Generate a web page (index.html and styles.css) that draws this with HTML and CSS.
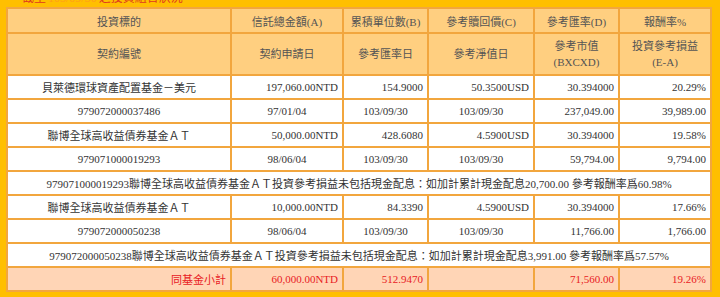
FILE: index.html
```html
<!DOCTYPE html>
<html lang="zh-Hant">
<head>
    <meta charset="UTF-8">
    <title>投資組合狀況</title>
    <link rel="stylesheet" href="styles.css">
</head>
<body>

<div class="titulo">截至<span class="fecha">103/09/30</span>之投資組合狀況</div>

<table class="cartera">
    <colgroup>
        <col class="c1"><col class="c2"><col class="c3"><col class="c4"><col class="c5"><col class="c6">
    </colgroup>
    <!-- Encabezados -->
    <tr class="cab cab1">
        <th>投資標的</th>
        <th>信託總金額(A)</th>
        <th>累積單位數(B)</th>
        <th>參考贖回價(C)</th>
        <th>參考匯率(D)</th>
        <th>報酬率%</th>
    </tr>
    <tr class="cab cab2">
        <th>契約編號</th>
        <th>契約申請日</th>
        <th>參考匯率日</th>
        <th>參考淨值日</th>
        <th>參考市值<br>(BXCXD)</th>
        <th>投資參考損益<br>(E-A)</th>
    </tr>

    <tr>
        <td class="nombre">貝萊德環球資產配置基金－美元</td>
        <td class="num">197,060.00NTD</td>
        <td class="num">154.9000</td>
        <td class="num">50.3500USD</td>
        <td class="num">30.394000</td>
        <td class="num">20.29%</td>
    </tr>
    <tr>
        <td class="nombre">979072000037486</td>
        <td class="fec">97/01/04</td>
        <td class="fec">103/09/30</td>
        <td class="fec">103/09/30</td>
        <td class="num">237,049.00</td>
        <td class="num">39,989.00</td>
    </tr>

    <tr>
        <td class="nombre">聯博全球高收益債券基金ＡＴ</td>
        <td class="num">50,000.00NTD</td>
        <td class="num">428.6080</td>
        <td class="num">4.5900USD</td>
        <td class="num">30.394000</td>
        <td class="num">19.58%</td>
    </tr>
    <tr>
        <td class="nombre">979071000019293</td>
        <td class="fec">98/06/04</td>
        <td class="fec">103/09/30</td>
        <td class="fec">103/09/30</td>
        <td class="num">59,794.00</td>
        <td class="num">9,794.00</td>
    </tr>
    <tr class="nota">
        <td colspan="6">979071000019293聯博全球高收益債券基金ＡＴ投資參考損益未包括現金配息：如加計累計現金配息20,700.00 參考報酬率爲60.98%</td>
    </tr>

    <tr>
        <td class="nombre">聯博全球高收益債券基金ＡＴ</td>
        <td class="num">10,000.00NTD</td>
        <td class="num">84.3390</td>
        <td class="num">4.5900USD</td>
        <td class="num">30.394000</td>
        <td class="num">17.66%</td>
    </tr>
    <tr>
        <td class="nombre">979072000050238</td>
        <td class="fec">98/06/04</td>
        <td class="fec">103/09/30</td>
        <td class="fec">103/09/30</td>
        <td class="num">11,766.00</td>
        <td class="num">1,766.00</td>
    </tr>
    <tr class="nota">
        <td colspan="6">979072000050238聯博全球高收益債券基金ＡＴ投資參考損益未包括現金配息：如加計累計現金配息3,991.00 參考報酬率爲57.57%</td>
    </tr>

    <!-- Subtotal -->
    <tr class="subtotal">
        <td class="num">同基金小計</td>
        <td class="num">60,000.00NTD</td>
        <td class="num">512.9470</td>
        <td class="num"></td>
        <td class="num">71,560.00</td>
        <td class="num">19.26%</td>
    </tr>
</table>

</body>
</html>
```

FILE: styles.css
```css
body {
    margin: 0;
    padding: 0 10px 0 6px;
    background-color: #ffbf00;
    font-family: "Liberation Serif", "Noto Sans CJK TC", serif;
    font-size: 11px;
    color: #333;
    overflow: hidden;
}
.titulo {
    margin-top: -10px;
    padding-left: 16px;
    height: 16px;
    line-height: 16px;
    font-size: 12px;
    color: #e03a1e;
}
.titulo .fecha {
    color: #ff9d1a;
    margin: 0 2px;
}
.cartera {
    margin-top: 1px;
    width: 704px;
    border-collapse: collapse;
    table-layout: fixed;
    border: 2px solid #f2a63e;
    background-color: #ffffff;
}
.c1 { width: 224px; }
.c2 { width: 112px; }
.c3 { width: 85px; }
.c4 { width: 106px; }
.c5 { width: 85px; }
.c6 { width: 92px; }
.cartera th, .cartera td {
    border: 2px solid #f2a63e;
    padding: 0 4px;
    white-space: nowrap;
    overflow: hidden;
}
.cartera td:last-child {
    border-left: 1px solid #ffd9a8;
}
.cab th {
    background-color: #ffcf80;
    font-weight: normal;
    color: #555;
    text-align: center;
    font-size: 11px;
}
.cab1 th {
    height: 23px;
}
.cab2 th {
    height: 40px;
    line-height: 16px;
}
.cartera td {
    height: 22px;
}
.nombre, .fec {
    text-align: center;
}
.num {
    text-align: right;
}
.nota td {
    text-align: center;
}
.subtotal td {
    background-color: #ffd5b6;
    color: #e8201f;
}
.subtotal td:last-child {
    border-left: 2px solid #f2a63e;
}
```
